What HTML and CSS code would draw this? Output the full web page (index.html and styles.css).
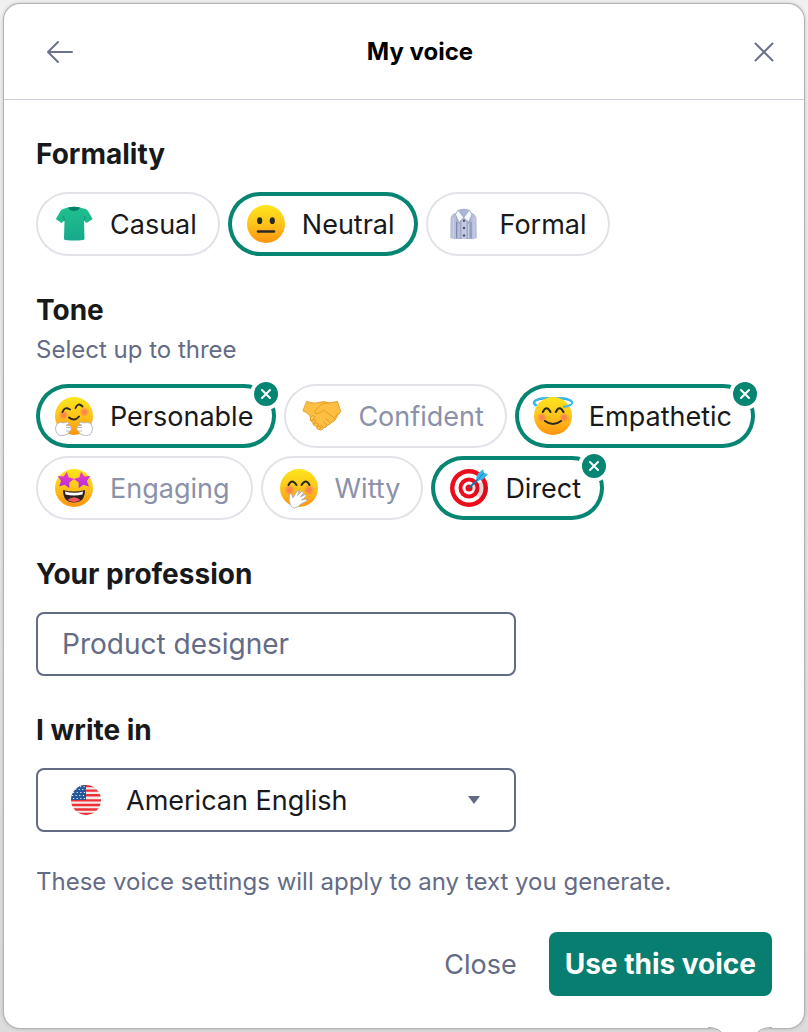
FILE: index.html
```html
<!DOCTYPE html>
<html lang="en">
  <head>
    <meta charset="utf-8">
    <title>My voice</title>
    <link rel="stylesheet" href="styles.css">
  </head>
  <body>
    <!-- shared gradients and shapes -->
    <svg class="defs" aria-hidden="true">
      <defs>
        <linearGradient id="face" x1="0" y1="0" x2="0" y2="1">
          <stop offset="0" stop-color="#fde51c"/>
          <stop offset=".45" stop-color="#fdc81b"/>
          <stop offset="1" stop-color="#fe9411"/>
        </linearGradient>
        <radialGradient id="blush">
          <stop offset="0" stop-color="#fb7850"/>
          <stop offset=".5" stop-color="#fb8450" stop-opacity=".8"/>
          <stop offset="1" stop-color="#fb8450" stop-opacity="0"/>
        </radialGradient>
        <linearGradient id="star-fill" x1="0" y1="0" x2="0" y2="1">
          <stop offset="0" stop-color="#f03ec2"/>
          <stop offset="1" stop-color="#b42fe0"/>
        </linearGradient>
        <linearGradient id="tee" x1="0" y1="0" x2="0" y2="1">
          <stop offset="0" stop-color="#1fc08d"/>
          <stop offset="1" stop-color="#17a98c"/>
        </linearGradient>
        <clipPath id="round"><circle cx="15" cy="15" r="15"/></clipPath>
        <path id="star" d="M0-8.500L2.600-3.200 8.400-2.500 4.200 1.700 5.200 7.500 0 4.800-5.200 7.500-4.200 1.700-8.400-2.500-2.600-3.200Z"/>
        <path id="cross" d="M-4-4L4 4M4-4L-4 4"/>
      </defs>
    </svg>

    <main class="panel">
      <header class="panel-header">
        <button type="button" class="back" aria-label="Back">
          <svg width="28" height="24" viewBox="0 0 28 24"><path d="M26 12H2M12 2L2 12l10 10"/></svg>
        </button>
        <h1>My voice</h1>
        <button type="button" class="dismiss" aria-label="Dismiss">
          <svg width="24" height="24" viewBox="0 0 24 24"><path d="M3.500 3.500l17 17M20.500 3.500l-17 17"/></svg>
        </button>
      </header>

      <form class="voice-form">
        <fieldset>
          <legend>Formality</legend>
          <div class="chips">
            <div class="chip">
              <input type="radio" id="casual" name="formality">
              <label for="casual">
                <svg class="icon" viewBox="0 0 38 38">
                  <path d="M13 2.500Q19 1 25 2.500L30.500 4Q32 4.500 33 6L37.700 14 31.500 18 29 15.500 29.500 33.500Q29.500 35 28 35 19 36 10.500 35 9 35 9 33.500L9.500 15.500 6.500 18 .8 14 5.500 6Q6.500 4.500 8 4Z" fill="url(#tee)"/>
                  <path d="M13 2.500Q19 1 25 2.500 23.500 6 19 6T13 2.500Z" fill="#087f68"/>
                  <path d="M9.500 15.500L8.500 11M29 15.500L30 11" stroke="#12967a" fill="none"/>
                </svg>
                Casual
              </label>
            </div>
            <div class="chip">
              <input type="radio" id="neutral" name="formality" checked>
              <label for="neutral">
                <svg class="icon" viewBox="0 0 38 38">
                  <circle cx="19" cy="19" r="19" fill="url(#face)"/>
                  <ellipse cx="12.700" cy="15.700" rx="2.600" ry="3.400" fill="#2a2a22"/>
                  <ellipse cx="25.300" cy="15.700" rx="2.600" ry="3.400" fill="#2a2a22"/>
                  <path d="M11 26.500H27" stroke="#2a2a22" stroke-width="2.400" stroke-linecap="round"/>
                </svg>
                Neutral
              </label>
            </div>
            <div class="chip">
              <input type="radio" id="formal" name="formality">
              <label for="formal">
                <svg class="icon" viewBox="0 0 38 38">
                  <path d="M12 7.500Q6 8.500 5.500 13.500L5.300 33Q8.500 34.500 11 34L12 33V7.500M25 7.500Q31 8.500 31.500 13.500L31.800 33Q28.500 34.500 26 34L25 33V7.500" fill="#b7bfda"/>
                  <path d="M11 8H26L27 34H11Z" fill="#a9b2cd"/>
                  <path d="M16 14h6v20h-6z" fill="#c3cae0"/>
                  <path d="M13 5Q19 2.500 24.500 5L22.500 10 18.800 12.500 15 10Z" fill="#aab5d9"/>
                  <path d="M13 5L18.700 12.500 14 17.500 10.500 9.500ZM24.500 5L18.700 12.500 23.500 17.500 27 9.500Z" fill="#f5f7ff" stroke="#929bb8" stroke-width=".7"/>
                  <path d="M11.500 17V33M26 17V33" stroke="#7d88aa"/>
                  <path d="M8.500 13V33M14 19V33M23.500 19V33M29 13V33" stroke="#d0d7ee" stroke-width=".7"/>
                  <path d="M16 15V34M22 15V34" stroke="#8994b3" stroke-width=".6"/>
                  <circle cx="19" cy="15.800" r="1.300" fill="#4d5878"/>
                  <circle cx="19" cy="23" r="1.300" fill="#4d5878"/>
                  <circle cx="19" cy="30.500" r="1.300" fill="#4d5878"/>
                </svg>
                Formal
              </label>
            </div>
          </div>
        </fieldset>

        <fieldset>
          <legend>Tone</legend>
          <p class="hint">Select up to three</p>
          <div class="chips">
            <div class="chip">
              <input type="checkbox" id="personable" name="tone" checked>
              <label for="personable">
                <svg class="icon" viewBox="0 0 38 38">
                  <circle cx="19" cy="19" r="19" fill="url(#face)"/>
                  <circle cx="8.500" cy="18" r="5" fill="url(#blush)"/>
                  <circle cx="29.500" cy="15" r="5" fill="url(#blush)"/>
                  <path d="M7.500 15Q9.500 9 15 12.500M20.500 11Q23 5 27.500 9.500M14 20.500Q19.500 25 24 19.500" fill="none" stroke="#2a2a22" stroke-width="1.900" stroke-linecap="round"/>
                  <g fill="#fff" stroke="#a5a9bb" stroke-width=".8">
                    <path d="M2 27Q5 24 9 26 13 24 14 26.500 12 28 11 28.500 16 28 16 30.500 17 33 14.500 34 14 37.500 10 38 4 39.500 1.500 36-1 31 2 27Z"/>
                    <path d="M36 27Q33 24 29 26 25 24 24 26.500 26 28 27 28.500 22 28 22 30.500 21 33 23.500 34 24 37.500 28 38 34 39.500 36.500 36 39 31 36 27Z"/>
                    <path d="M11 30.500H15M11 34H14M27 30.500H23M27 34H24" fill="none"/>
                  </g>
                </svg>
                Personable
              </label>
              <button type="button" class="remove" aria-label="Remove Personable">
                <svg viewBox="-12 -12 24 24"><use href="#cross"/></svg>
              </button>
            </div>
            <div class="chip">
              <input type="checkbox" id="confident" name="tone" disabled>
              <label for="confident">
                <svg class="icon" viewBox="0 0 38 38">
                  <g stroke="#e49722" stroke-width=".9" stroke-linejoin="round" stroke-linecap="round">
                    <path d="M4 4.500Q11 7 15.500 5.500 21 3.500 26 6L34.500 4.500 37.800 14.500Q34 19 32.500 22 31.500 25 28 25.500 27 28 24.500 28 23.500 31 20.500 30.500 19.500 34 16 32.500 13 32 13.500 29 9.500 29 10 25.500 6 24 7.500 20.500 6 16 .2 14Z" fill="#fcbf42"/>
                    <path d="M26 6Q20 6 17.500 8L12 14Q11 17 14.500 16.500 18 16 20.500 13L32.500 22" fill="none"/>
                    <path d="M27 25.500L23 22M24 28L20.500 25M20.500 30.500L18 28" fill="none"/>
                    <path d="M7.500 20.500Q10 17 12 20L8.500 24Q11 21.500 13 23.500L10.500 27Q13 24.500 15.500 27L13.500 30Q16 28 18 30L16 32.500" fill="#fdc750"/>
                    <path d="M34.500 17Q33 20 31 20.500" fill="none"/>
                  </g>
                </svg>
                Confident
              </label>
            </div>
            <div class="chip">
              <input type="checkbox" id="empathetic" name="tone" checked>
              <label for="empathetic">
                <svg class="icon" viewBox="0 0 38 38">
                  <path d="M0 5Q3 1 19 1T38 5" fill="none" stroke="#239fda" stroke-width="2"/>
                  <circle cx="19" cy="19" r="19" fill="url(#face)"/>
                  <path d="M2 9Q-2 6 1 3.500 5 1 10 1M28 1Q33 1 37 3.500 40 6 36 8 34 9.500 29 10" fill="none" stroke="#3bb8ee" stroke-width="2"/>
                  <path d="M3 8.500Q-1 6 1 4" fill="none" stroke="#3bb8ee" stroke-width="2"/>
                  <circle cx="8" cy="20.500" r="5" fill="url(#blush)"/>
                  <circle cx="30" cy="20.500" r="5" fill="url(#blush)"/>
                  <path d="M8.800 15Q12.500 7.500 16.500 15M21.800 15Q25.500 7.500 29.500 15M11 24Q19 30 27 24" fill="none" stroke="#2a2a22" stroke-width="2.100" stroke-linecap="round"/>
                </svg>
                Empathetic
              </label>
              <button type="button" class="remove" aria-label="Remove Empathetic">
                <svg viewBox="-12 -12 24 24"><use href="#cross"/></svg>
              </button>
            </div>
            <div class="chip">
              <input type="checkbox" id="engaging" name="tone" disabled>
              <label for="engaging">
                <svg class="icon" viewBox="0 0 38 38">
                  <circle cx="19" cy="19" r="19" fill="url(#face)"/>
                  <use href="#star" transform="translate(10.500 11) rotate(10)" fill="url(#star-fill)"/>
                  <use href="#star" transform="translate(27.500 11) rotate(-10)" fill="url(#star-fill)"/>
                  <path d="M8 21Q19 24 30 21 30 33.500 19 33.500T8 21Z" fill="#2b211f"/>
                  <path d="M10 22.500Q19 25 28 22.500L27.500 25.500Q19 27.500 10.500 25.500Z" fill="#fff"/>
                  <path d="M12.500 31Q19 25.500 25.500 31 19 35 12.500 31Z" fill="#f2575f"/>
                </svg>
                Engaging
              </label>
            </div>
            <div class="chip">
              <input type="checkbox" id="witty" name="tone" disabled>
              <label for="witty">
                <svg class="icon" viewBox="0 0 38 38">
                  <circle cx="19" cy="19" r="19" fill="url(#face)"/>
                  <circle cx="9.500" cy="21" r="5.500" fill="url(#blush)"/>
                  <circle cx="29" cy="21" r="5.500" fill="url(#blush)"/>
                  <path d="M8.500 16Q12 9 16.500 16M21.500 16Q26 9 29.500 16" fill="none" stroke="#2a2a22" stroke-width="2" stroke-linecap="round"/>
                  <path d="M11 37Q8 31 9.500 25.500 11 23.500 12 26L13 29 17 22Q19 20.500 19 23L17.500 26.500 21.500 22.500Q24 21.500 23.500 24L20.500 28 25 25.500Q27 25.500 26 27.500L21.500 31 26 30Q28 31 26 32.500L21 35Q18 38.500 14.500 39 12 39 11 37Z" fill="#fff" stroke="#a5a9bb" stroke-width=".8"/>
                </svg>
                Witty
              </label>
            </div>
            <div class="chip">
              <input type="checkbox" id="direct" name="tone" checked>
              <label for="direct">
                <svg class="icon" viewBox="0 0 38 38">
                  <circle cx="19" cy="19" r="19" fill="#ec0d1c"/>
                  <circle cx="19" cy="19" r="14.500" fill="#fff"/>
                  <circle cx="19" cy="19" r="10.500" fill="#ec0d1c"/>
                  <circle cx="19" cy="19" r="6.500" fill="#fff"/>
                  <circle cx="19" cy="19" r="3.500" fill="#ec0d1c"/>
                  <path d="M19 19L25 24 32 32Q38 26 38 19L33 12Z" fill="#7d1018" opacity=".16"/>
                  <path d="M19.500 18.500L30 8.500" stroke="#1c6f9f" stroke-width="2" stroke-linecap="round"/>
                  <path d="M26.500 11.500Q26 7 28 4.500L33 .2 34 4 38 5 33.500 10Q31 12 26.500 11.500Z" fill="#32b4ea"/>
                  <path d="M26.500 11.500L34 4" stroke="#1481bc" stroke-width="1"/>
                </svg>
                Direct
              </label>
              <button type="button" class="remove" aria-label="Remove Direct">
                <svg viewBox="-12 -12 24 24"><use href="#cross"/></svg>
              </button>
            </div>
          </div>
        </fieldset>

        <div class="field">
          <label for="profession">Your profession</label>
          <input type="text" id="profession" placeholder="Product designer">
        </div>

        <div class="field">
          <label for="language">I write in</label>
          <div class="select">
            <svg class="flag" viewBox="0 0 30 30">
              <g clip-path="url(#round)">
                <path d="M0 0h30v30H0z" fill="#f3ebea"/>
                <path d="M0 1H30M0 5.600H30M0 10.200H30M0 15.400H30M0 20H30M0 24.500H30M0 29H30" stroke="#ee3036" stroke-width="2.400"/>
                <path d="M0 0h15v15H0z" fill="#23589b"/>
                <path d="M4 4.500H15M2 7.500H15M1 10.500H15M2 13.500H15" stroke="#e6eefa" stroke-width="1.100" stroke-dasharray="1.200 2.400"/>
                <path d="M9 1.800H15" stroke="#e6eefa" stroke-width="1.100" stroke-dasharray="1.200 2.400"/>
              </g>
            </svg>
            <select id="language">
              <option>American English</option>
            </select>
            <svg class="caret" viewBox="0 0 12 8"><path d="M0 0h12L6 8z"/></svg>
          </div>
        </div>

        <p class="note">These voice settings will apply to any text you generate.</p>

        <div class="actions">
          <button type="button" class="close">Close</button>
          <button type="submit" class="submit">Use this voice</button>
        </div>
      </form>
      <svg class="tail" viewBox="0 0 64 5">
        <path d="M0 0H64V1Q54 1 50 5H13Q9 1 0 1Z" fill="#fff"/>
        <path d="M0 .5Q9 .5 13 5M50 5Q54 .5 64 .5" fill="none" stroke="#aaa"/>
      </svg>
    </main>
  </body>
</html>
```
FILE: styles.css
```css
* {
  box-sizing: border-box;
}
body {
  margin: 0;
  padding: 4px;
  background: linear-gradient(#f0f0f0, #dcdcdc);
  font-family: Inter, "Liberation Sans", sans-serif;
  font-size: 27px;
  color: #18191b;
}
h1,
p,
fieldset {
  margin: 0;
  padding: 0;
  border: 0;
}
button,
input,
select {
  font: inherit;
}
button {
  padding: 0;
  border: 0;
  background: none;
  color: #646b85;
  cursor: pointer;
}
.defs {
  position: absolute;
  width: 0;
  height: 0;
}
.panel {
  position: relative;
  background: #fff;
  border-radius: 16px;
  box-shadow: 0 0 0 1px #b4b4b4, 0 0 4px rgba(0, 0, 0, 0.3);
}

/* header */
.panel-header {
  display: flex;
  align-items: center;
  height: 96px;
  padding: 0 28px;
  border-bottom: 1px solid #cdced8;
}
.panel-header h1 {
  flex: 1;
  text-align: center;
  font-size: 24px;
  font-weight: 700;
  color: #000;
}
.panel-header svg {
  display: block;
  fill: none;
  stroke: #6b728c;
  stroke-width: 2;
  stroke-linecap: round;
  stroke-linejoin: round;
}
.back {
  width: 56px;
  padding-left: 14px;
}

/* form */
.voice-form {
  padding: 36px 32px 32px;
}
fieldset,
.field {
  margin-bottom: 36px;
}
legend,
.field label {
  display: block;
  margin-bottom: 20px;
  padding: 0;
  font-size: 28px;
  font-weight: 700;
  line-height: 36px;
}
.hint,
.note {
  font-size: 24px;
  line-height: 32px;
  color: #646b85;
}
.hint {
  margin: -14px 0 18px;
}

.chips {
  display: flex;
  flex-wrap: wrap;
  gap: 8px;
}
.chip {
  position: relative;
}
.chip input {
  position: absolute;
  opacity: 0;
}
.chip label {
  display: flex;
  align-items: center;
  gap: 17px;
  height: 64px;
  padding: 0 23px 0 19px;
  border-radius: 32px;
  box-shadow: inset 0 0 0 2px #e2e3e9;
  cursor: pointer;
}
.chip input:checked + label {
  box-shadow: inset 0 0 0 4px #058572;
}
.chip input:disabled + label {
  color: #8b91a8;
}
.icon {
  width: 38px;
  height: 38px;
  overflow: visible;
}
.remove {
  position: absolute;
  top: -2px;
  right: -2px;
  width: 24px;
  height: 24px;
  border-radius: 50%;
  background: #058572;
  box-shadow: 0 0 0 4px #fff;
}
.remove svg {
  display: block;
  fill: none;
  stroke: #fff;
  stroke-width: 2;
  stroke-linecap: round;
}

.field input,
.select select {
  display: block;
  width: 100%;
  max-width: 480px;
  height: 64px;
  padding: 0 24px;
  border: 2px solid #646b85;
  border-radius: 8px;
  background: #fff;
  color: #18191b;
}
.field input {
  font-size: 28px;
}
.field input::placeholder {
  color: #646b85;
  opacity: 1;
}
.select {
  position: relative;
  max-width: 480px;
}
.select select {
  padding-left: 88px;
  appearance: none;
}
.flag,
.caret {
  position: absolute;
  pointer-events: none;
}
.flag {
  top: 17px;
  left: 35px;
  width: 30px;
}
.caret {
  top: 28px;
  right: 36px;
  width: 12px;
  fill: #646b85;
}

.note {
  margin: -2px 0 34px;
}
.actions {
  display: flex;
  justify-content: flex-end;
  gap: 32px;
}
.submit {
  height: 64px;
  padding: 0 16px;
  border-radius: 8px;
  background: #077e6f;
  color: #fff;
  font-size: 28px;
  font-weight: 700;
}
.tail {
  position: absolute;
  right: 32px;
  bottom: -4px;
  width: 64px;
}
```
